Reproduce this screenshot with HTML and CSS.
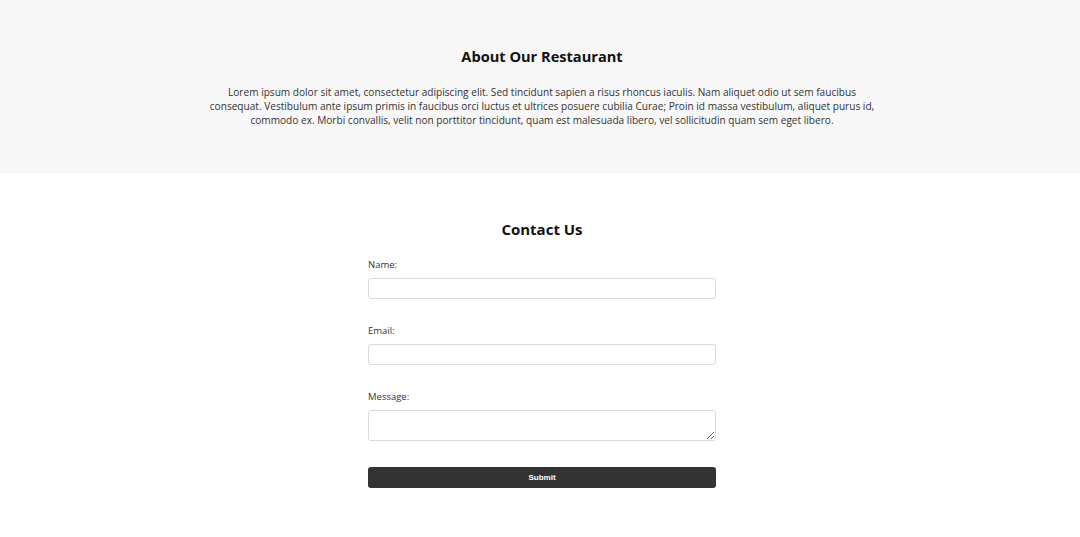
FILE: index.html
```html
<!DOCTYPE html>
<html lang="en">
<head>
<meta charset="utf-8">
<title>Restaurant</title>
<link rel="stylesheet" href="styles.css">
</head>
<body>
<section class="about">
  <h2 class="about-title">About Our Restaurant</h2>
  <p class="about-text">Lorem ipsum dolor sit amet, consectetur adipiscing elit. Sed tincidunt sapien a risus rhoncus iaculis. Nam aliquet odio ut sem faucibus consequat. Vestibulum ante ipsum primis in faucibus orci luctus et ultrices posuere cubilia Curae; Proin id massa vestibulum, aliquet purus id, commodo ex. Morbi convallis, velit non porttitor tincidunt, quam est malesuada libero, vel sollicitudin quam sem eget libero.</p>
</section>
<section class="contact">
  <h2 class="contact-title">Contact Us</h2>
  <form class="contact-form">
    <label class="field-label" for="name">Name:</label>
    <input class="field-input" type="text" id="name">
    <label class="field-label" for="email">Email:</label>
    <input class="field-input" type="email" id="email">
    <label class="field-label" for="message">Message:</label>
    <textarea class="field-input field-textarea" id="message"></textarea>
    <button class="submit-btn" type="button">Submit</button>
  </form>
</section>
</body>
</html>
```
FILE: styles.css
```css
* { box-sizing: border-box; }
html, body { margin: 0; padding: 0; background: #fff; }
body {
  font-family: "Open Sans", "DejaVu Sans", sans-serif;
  color: #222;
}
.about {
  background: #f7f7f7;
  padding: 46px 0 0 4px;
  display: flex;
  flex-direction: column;
  align-items: center;
  height: 173px;
}
.about-title {
  margin: 0;
  font-size: 14.6px;
  font-weight: 700;
  line-height: 20px;
  color: #111;
}
.about-text {
  margin: 19px 0 0;
  width: 670px;
  text-align: center;
  font-size: 10.1px;
  line-height: 14px;
  color: #333;
}
.contact {
  padding: 46px 0 0 4px;
  display: flex;
  flex-direction: column;
  align-items: center;
}
.contact-title {
  margin: 0;
  font-size: 15px;
  font-weight: 700;
  line-height: 20px;
  color: #111;
}
.contact-form {
  width: 348px;
  margin-top: 20px;
  display: flex;
  flex-direction: column;
}
.field-label {
  font-size: 9.5px;
  line-height: 12px;
  color: #333;
  margin-bottom: 7px;
}
.field-input {
  height: 21px;
  border: 1px solid #d9d9d9;
  border-radius: 3px;
  background: #fff;
  margin: 0 0 26px;
  padding: 4px 6px;
  font: inherit;
}
.field-label + .field-input { margin-bottom: 26px; }
.field-textarea {
  height: 31px;
  resize: vertical;
  margin-bottom: 25px;
}
.submit-btn {
  height: 21px;
  border: none;
  border-radius: 3px;
  background: #333;
  color: #fff;
  font-family: "Liberation Sans", Arial, sans-serif;
  font-size: 8px;
  font-weight: 700;
  padding: 0;
  cursor: pointer;
}
```
